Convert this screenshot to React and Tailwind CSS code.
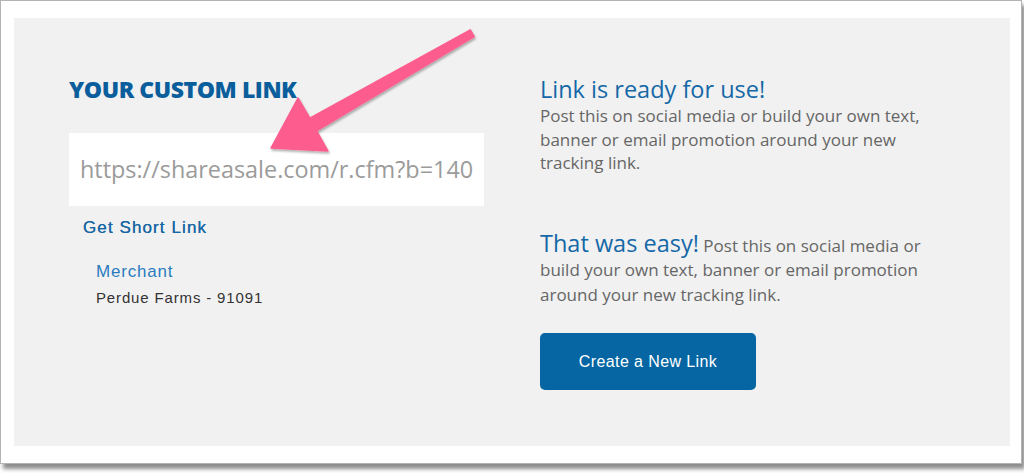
import React from "react"

const openSans = { fontFamily: '"Open Sans", "DejaVu Sans", sans-serif' }

function PinkArrow() {
  return (
    <svg
      className="pointer-events-none absolute left-0 top-0"
      width="1024"
      height="473"
      viewBox="0 0 1024 473"
    >
      <defs>
        <filter id="arrowShadow" x="-10%" y="-10%" width="130%" height="130%">
          <feDropShadow dx="1" dy="2" stdDeviation="1.2" floodColor="#000" floodOpacity="0.3" />
        </filter>
      </defs>
      <path
        d="M470.3 29.8 L309.8 118.2 L298 98 L271 148 L328 151 L316.6 130.8 L474.2 36.6 Z"
        fill="#fd5d8e"
        stroke="#fd5d8e"
        strokeWidth="1.5"
        strokeLinejoin="round"
        filter="url(#arrowShadow)"
      />
    </svg>
  )
}

export default function App() {
  return (
    <div className="relative h-[473px] w-[1024px] overflow-hidden bg-white">
      <div className="h-[464px] w-[1022px] border border-[#b3b3b3] bg-white pb-[17px] pl-[13px] pr-[11px] pt-[17px] shadow-[3px_5px_4px_rgba(0,0,0,0.45)]">
        <div className="flex h-full w-full gap-[56px] bg-[#f1f1f1] pl-[55px] pt-[58px]">
          {/* left column */}
          <div className="flex w-[415px] flex-col">
            <h2
              className="text-[23px] font-extrabold uppercase leading-[26px] tracking-[-0.45px] text-[#0b5e9c]"
              style={openSans}
            >
              Your Custom Link
            </h2>
            <div className="mt-[31px] bg-white px-[11px] py-[21px]">
              <div
                className="whitespace-nowrap text-[23.4px] leading-[31px] text-[#9b9b9b]"
                style={openSans}
              >
                https://shareasale.com/r.cfm?b=140
              </div>
            </div>
            <a className="ml-[14px] mt-[12px] font-['Liberation_Sans',Arial,sans-serif] text-[17px] leading-[20px] tracking-[1.1px] text-[#1867a4] [text-shadow:0_0_0.4px_#1867a4]">
              Get Short Link
            </a>
            <div className="ml-[27px] mt-[24px] flex flex-col gap-[6px] font-['Liberation_Sans',Arial,sans-serif]">
              <div className="text-[17px] leading-[20px] tracking-[0.8px] text-[#2b7cbf]">Merchant</div>
              <div className="text-[15px] leading-[20px] tracking-[0.85px] text-[#333]">Perdue Farms - 91091</div>
            </div>
          </div>

          {/* right column */}
          <div className="flex w-[400px] flex-col" style={openSans}>
            <h3 className="text-[23.5px] leading-[26px] text-[#1468a7]">Link is ready for use!</h3>
            <p className="mt-[2px] text-[17px] leading-[23.5px] text-[#666]">
              Post this on social media or build your own text, banner or email promotion around your new tracking link.
            </p>
            <p className="mt-[56px] text-[17px] leading-[24.5px] text-[#666]">
              <span className="text-[23.5px] text-[#1468a7]">That was easy!</span> Post this on social media or build your
              own text, banner or email promotion around your new tracking link.
            </p>
            <button
              type="button"
              className="mt-[26px] h-[57px] w-[216px] rounded-[5px] bg-[#0566a3] font-['Liberation_Sans',Arial,sans-serif] text-[16px] tracking-[0.4px] text-white"
            >
              Create a New Link
            </button>
          </div>
        </div>
      </div>
      <PinkArrow />
    </div>
  )
}
